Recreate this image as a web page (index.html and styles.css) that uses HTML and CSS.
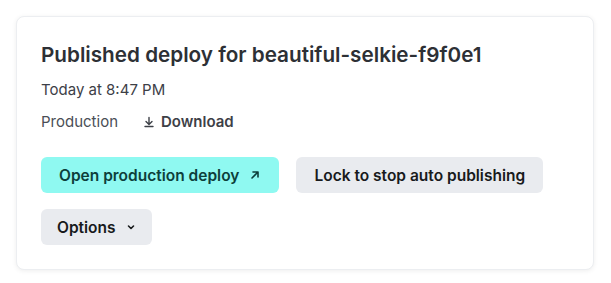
FILE: index.html
```html
<!DOCTYPE html>
<html lang="en">
<head>
  <meta charset="UTF-8">
  <title>Published deploy</title>
  <link rel="stylesheet" href="styles.css">
</head>
<body>

  <div class="deploy-card">
    <h2>Published deploy for beautiful-selkie-f9f0e1</h2>
    <p class="deploy-time">Today at 8:47 PM</p>

    <div class="deploy-meta">
      <span class="context">Production</span>
      <a class="download" href="#">
        <svg width="12" height="12" viewBox="0 0 12 12" aria-hidden="true">
          <path d="M6 1.5v6.5M3 5.5l3 3 3-3M2 10.5h8" fill="none" stroke="currentColor" stroke-width="1.4" stroke-linecap="round" stroke-linejoin="round"/>
        </svg>
        Download
      </a>
    </div>

    <div class="actions actions-main">
      <a class="btn btn-primary" href="#">
        Open production deploy
        <svg width="12" height="12" viewBox="0 0 12 12" aria-hidden="true">
          <path d="M3 9l6-6M4 3h5v5" fill="none" stroke="currentColor" stroke-width="1.6" stroke-linecap="round" stroke-linejoin="round"/>
        </svg>
      </a>
      <button class="btn">Lock to stop auto publishing</button>
    </div>

    <div class="actions">
      <button class="btn btn-options">
        Options
        <svg width="10" height="10" viewBox="0 0 10 10" aria-hidden="true">
          <path d="M2.5 4l2.5 2.5L7.5 4" fill="none" stroke="currentColor" stroke-width="1.6" stroke-linecap="round" stroke-linejoin="round"/>
        </svg>
      </button>
    </div>
  </div>

</body>
</html>
```

FILE: styles.css
```css
body {
  font-family: Inter, 'Noto Sans', sans-serif;
  background-color: #fff;
  margin: 0;
  padding: 16px;
  color: #2d3035;
}
.deploy-card {
  width: 578px;
  box-sizing: border-box;
  background-color: #fff;
  border: 1px solid #eceef1;
  border-radius: 8px;
  box-shadow: 0 1px 5px rgba(0, 0, 0, 0.07);
  padding: 24px;
}
h2 {
  margin: 0;
  font-size: 20.7px;
  line-height: 28px;
  font-weight: 600;
  color: #2d3035;
}
.deploy-time {
  margin: 9px 0 0;
  font-size: 15px;
  line-height: 24px;
  color: #3d4047;
}
.deploy-meta {
  display: flex;
  align-items: center;
  gap: 25px;
  margin-top: 8px;
  font-size: 15px;
  line-height: 24px;
  color: #4a4e56;
}
.download {
  display: flex;
  align-items: center;
  gap: 6px;
  color: #3d4047;
  font-weight: 600;
  text-decoration: none;
}
.actions {
  display: flex;
  gap: 17px;
  margin-top: 16px;
}
.actions-main {
  margin-top: 23px;
}
.btn {
  display: inline-flex;
  align-items: center;
  gap: 10px;
  height: 36px;
  padding: 0 18px 0 18px;
  border: none;
  border-radius: 6px;
  background-color: #e9ebef;
  color: #181a1c;
  font-family: inherit;
  font-size: 15.5px;
  font-weight: 600;
  text-decoration: none;
  cursor: pointer;
}
.btn-options {
  padding: 0 16px;
}
.btn-primary {
  background-color: #8ff9f1;
  color: #0d3f3b;
}
```
